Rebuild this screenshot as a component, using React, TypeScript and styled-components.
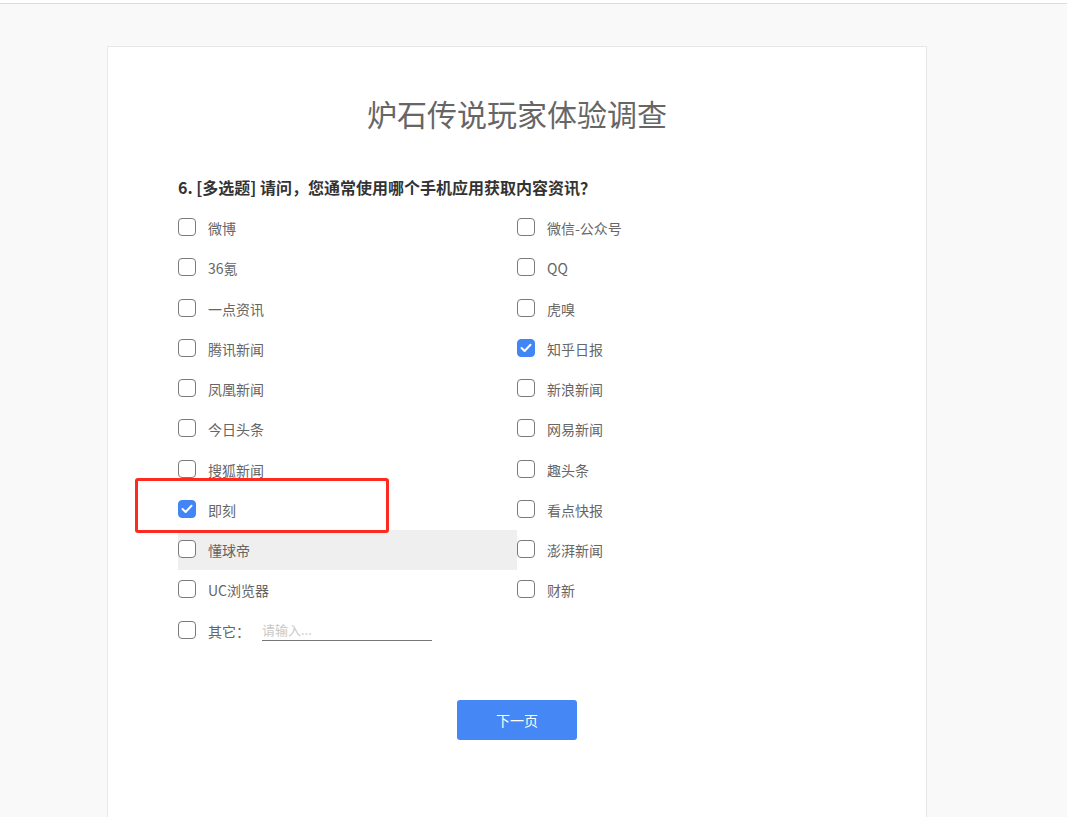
import React from "react";
import styled, { createGlobalStyle } from "styled-components";

const GlobalStyle = createGlobalStyle`
  html, body {
    margin: 0;
    padding: 0;
    background: #f9f9f9;
    font-family: "Noto Sans CJK SC", "Noto Sans", "Liberation Sans", sans-serif;
  }
  * { box-sizing: border-box; }
`;

const TopBar = styled.div`
  height: 4px;
  background: #ffffff;
  border-bottom: 1px solid #dcdcdc;
`;

const Card = styled.main`
  margin: 42px 0 0 107px;
  width: 820px;
  height: 771px;
  background: #ffffff;
  border: 1px solid #e8e8e8;
  border-bottom: none;
  padding: 46px 0 0 70px;
`;

const Title = styled.h1`
  margin: 0 0 0 -70px;
  text-align: center;
  font-size: 30px;
  line-height: 40px;
  font-weight: 400;
  color: #666666;
`;

const Question = styled.h2`
  margin: 42px 0 9px;
  font-size: 16px;
  line-height: 24px;
  font-weight: 700;
  color: #333333;
`;

const Options = styled.div`
  display: grid;
  grid-template-columns: 339px 339px;
  grid-auto-rows: 40.25px;
`;

const Cell = styled.label<{ $hover?: boolean }>`
  position: relative;
  display: flex;
  align-items: center;
  gap: 12px;
  background: ${(p) => (p.$hover ? "#efefef" : "transparent")};
  font-size: 14px;
  color: #666666;
  cursor: pointer;
`;

const Box = styled.span<{ $checked?: boolean }>`
  width: 18px;
  height: 18px;
  flex: none;
  margin-top: -2px;
  border-radius: 4px;
  border: 1px solid ${(p) => (p.$checked ? "#4285f4" : "#7a7a7a")};
  background: ${(p) => (p.$checked ? "#4285f4" : "#ffffff")};
  display: flex;
  align-items: center;
  justify-content: center;
`;

const Mark = styled.span`
  position: absolute;
  z-index: 2;
  left: -43px;
  top: -12px;
  width: 254px;
  height: 55px;
  border: 3px solid #ff2a1f;
  border-radius: 3px;
  pointer-events: none;
`;

const OtherInput = styled.input`
  width: 170px;
  margin-left: 0;
  border: none;
  border-bottom: 1px solid #777777;
  outline: none;
  background: transparent;
  font-family: inherit;
  font-size: 13px;
  line-height: 18px;
  padding: 0 0 1px;
  color: #666666;
  &::placeholder { color: #c8c8c8; }
`;

const Footer = styled.div`
  display: flex;
  justify-content: center;
  margin: 49px 0 0 -70px;
`;

const NextButton = styled.button`
  width: 120px;
  height: 40px;
  border: none;
  border-radius: 3px;
  background: #4587f5;
  color: #ffffff;
  font-family: inherit;
  font-size: 14px;
  cursor: pointer;
`;

const Check = () => (
  <svg width="12" height="10" viewBox="0 0 12 10">
    <polyline points="1.5,5 4.6,8 10.5,1.8" fill="none" stroke="#fff" strokeWidth="2" strokeLinecap="round" strokeLinejoin="round" />
  </svg>
);

type Opt = { label: string; checked?: boolean; hover?: boolean; marked?: boolean };

const options: Opt[] = [
  { label: "微博" },
  { label: "微信-公众号" },
  { label: "36氪" },
  { label: "QQ" },
  { label: "一点资讯" },
  { label: "虎嗅" },
  { label: "腾讯新闻" },
  { label: "知乎日报", checked: true },
  { label: "凤凰新闻" },
  { label: "新浪新闻" },
  { label: "今日头条" },
  { label: "网易新闻" },
  { label: "搜狐新闻" },
  { label: "趣头条" },
  { label: "即刻", checked: true, marked: true },
  { label: "看点快报" },
  { label: "懂球帝", hover: true },
  { label: "澎湃新闻" },
  { label: "UC浏览器" },
  { label: "财新" },
];

export default function App() {
  return (
    <>
      <GlobalStyle />
      <TopBar />
      <Card>
        <Title>炉石传说玩家体验调查</Title>
        <Question>6. [多选题] 请问，您通常使用哪个手机应用获取内容资讯？</Question>
        <Options>
          {options.map((o) => (
            <Cell key={o.label} $hover={o.hover}>
              <Box $checked={o.checked}>{o.checked && <Check />}</Box>
              <span>{o.label}</span>
              {o.marked && <Mark />}
            </Cell>
          ))}
          <Cell>
            <Box />
            <span>其它：</span>
            <OtherInput placeholder="请输入..." />
          </Cell>
        </Options>
        <Footer>
          <NextButton>下一页</NextButton>
        </Footer>
      </Card>
    </>
  );
}
